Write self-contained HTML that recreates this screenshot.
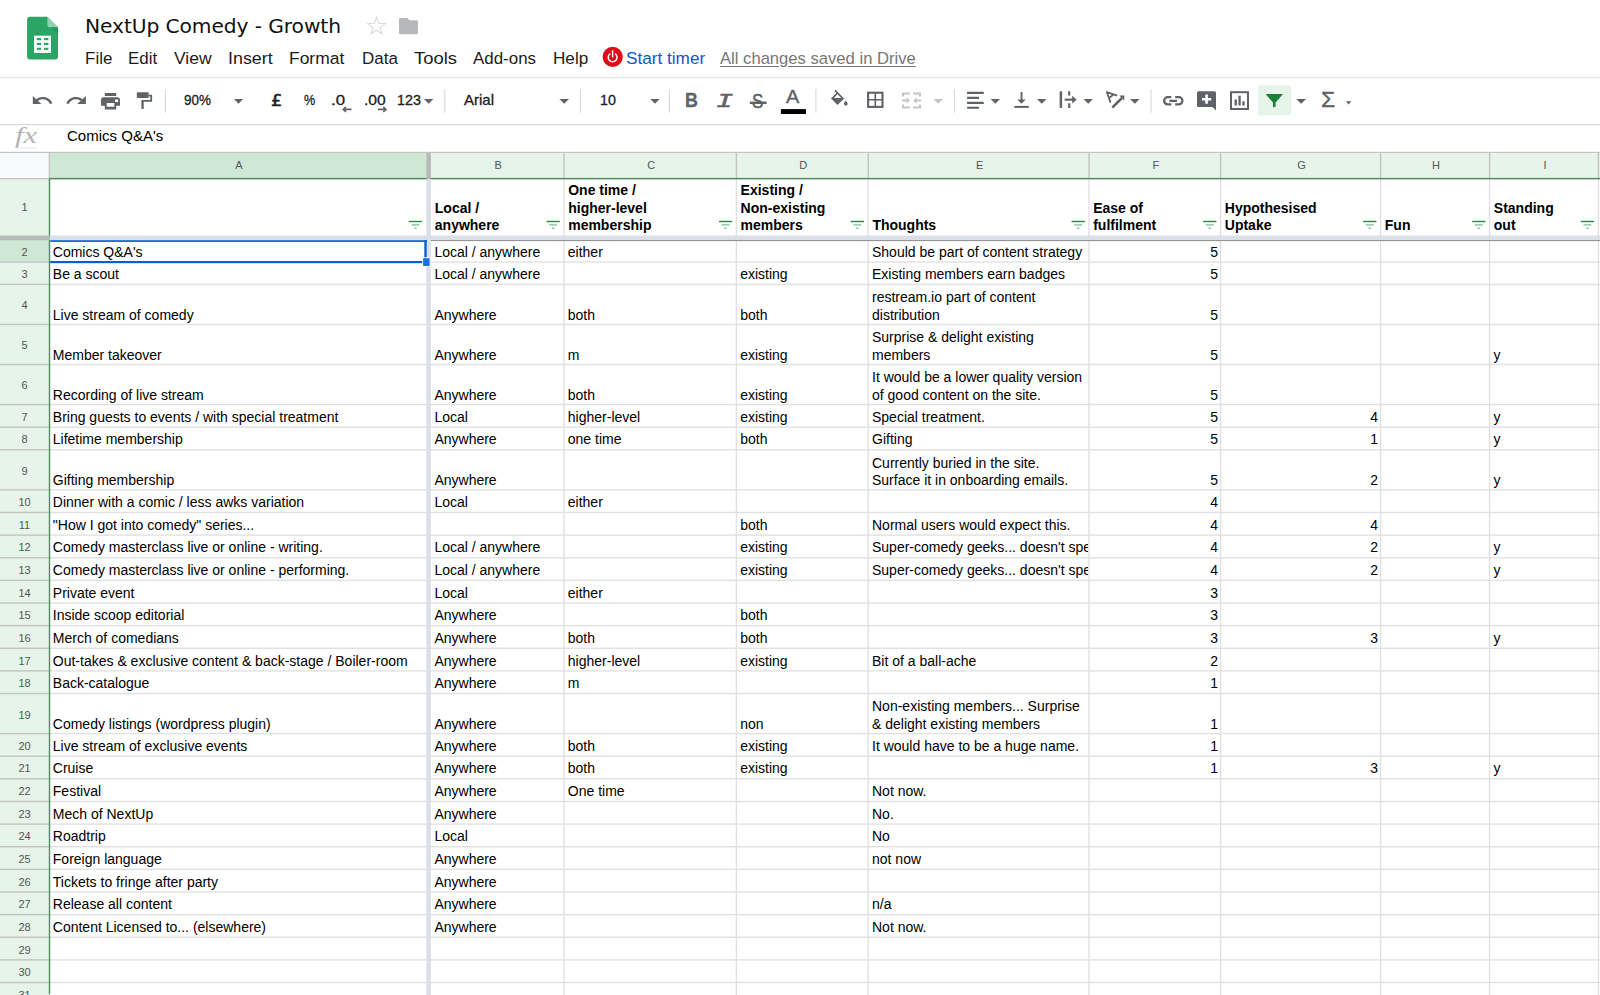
<!DOCTYPE html>
<html><head><meta charset="utf-8"><title>NextUp Comedy - Growth</title>
<style>
html,body{margin:0;padding:0;background:#fff;}
body{width:1600px;height:995px;overflow:hidden;position:relative;font-family:"Liberation Sans",sans-serif;color:#000;}
.abs{position:absolute;}
.t{position:absolute;white-space:pre;line-height:1;}
#title{font:20px/26px "DejaVu Sans","Liberation Sans",sans-serif;color:#111;letter-spacing:-0.1px;}
.m{position:absolute;top:48px;font-size:17.2px;line-height:20px;color:#1b1b1b;white-space:pre;}
.tb{position:absolute;font-size:14.4px;line-height:16px;color:#202124;white-space:pre;-webkit-text-stroke:0.3px currentColor;}
.c{position:absolute;overflow:hidden;}
.c span{position:absolute;left:3.8px;bottom:0.2px;font-size:14px;line-height:17.3px;white-space:nowrap;}
.c.r span{left:auto;right:1.7px;}
.h span{bottom:0px;}
.c.h span{font-weight:bold;bottom:0px;}
.l{position:absolute;height:18px;line-height:18px;font-size:14px;white-space:nowrap;overflow:hidden;}
.l.b{font-weight:bold;}
.l.r{text-align:right;}
.rn{position:absolute;left:0;width:49px;text-align:center;font-size:11px;line-height:12px;color:#555;}
.cn{position:absolute;top:158.5px;text-align:center;font-size:11px;line-height:12px;color:#555;}
svg{position:absolute;left:0;top:0;}
</style></head><body>

<div class="t fit" id="title" style="left:85.06px;top:13px;transform:scaleX(1.0117);transform-origin:0 50%;">NextUp Comedy - Growth</div>
<div class="m fit" style="left:85.13px;top:47.5px;transform:scaleX(0.9902);transform-origin:0 50%;">File</div>
<div class="m fit" style="left:128.37px;top:47.5px;transform:scaleX(0.9839);transform-origin:0 50%;">Edit</div>
<div class="m fit" style="left:174.23px;top:47.5px;transform:scaleX(1.0167);transform-origin:0 50%;">View</div>
<div class="m fit" style="left:227.59px;top:47.5px;transform:scaleX(1.0392);transform-origin:0 50%;">Insert</div>
<div class="m fit" style="left:289.45px;top:47.5px;transform:scaleX(1.0146);transform-origin:0 50%;">Format</div>
<div class="m fit" style="left:361.76px;top:47.5px;transform:scaleX(0.9862);transform-origin:0 50%;">Data</div>
<div class="m fit" style="left:413.74px;top:47.5px;transform:scaleX(1.0736);transform-origin:0 50%;">Tools</div>
<div class="m fit" style="left:472.72px;top:47.5px;transform:scaleX(0.9843);transform-origin:0 50%;">Add-ons</div>
<div class="m fit" style="left:552.70px;top:47.5px;transform:scaleX(0.9968);transform-origin:0 50%;">Help</div>
<div class="m fit" style="left:625.88px;top:47.5px;transform:scaleX(0.9986);transform-origin:0 50%;color:#1155cc">Start timer</div>
<div class="m fit" style="left:720.20px;top:47.5px;transform:scaleX(0.9666);transform-origin:0 50%;color:#777;text-decoration:underline;text-decoration-thickness:1px;text-underline-offset:2px">All changes saved in Drive</div>
<div class="tb fit" style="left:184.20px;top:91.5px;transform:scaleX(0.9337);transform-origin:0 50%;">90%</div>
<div class="tb fit" style="left:270.53px;top:92.5px;transform:scaleX(1.1771);transform-origin:0 50%;font:15px/17px 'DejaVu Sans','Liberation Sans',sans-serif;-webkit-text-stroke:0.55px currentColor">£</div>
<div class="tb fit" style="left:303.51px;top:91.5px;transform:scaleX(0.8737);transform-origin:0 50%;">%</div>
<div class="tb fit" style="left:331.16px;top:91.5px;transform:scaleX(1.1654);transform-origin:0 50%;">.0</div>
<div class="tb fit" style="left:363.89px;top:91.5px;transform:scaleX(1.0874);transform-origin:0 50%;">.00</div>
<div class="tb fit" style="left:397.00px;top:91.5px;transform:scaleX(0.9925);transform-origin:0 50%;">123</div>
<div class="tb fit" style="left:464.04px;top:91.5px;transform:scaleX(1.0434);transform-origin:0 50%;">Arial</div>
<div class="tb fit" style="left:599.87px;top:91.5px;transform:scaleX(0.9936);transform-origin:0 50%;">10</div>
<div class="tb fit" style="left:685.47px;top:88.8px;transform:scaleX(0.9143);transform-origin:0 50%;font-weight:bold;font-size:19.5px;line-height:22px;color:#5f6368">B</div>
<div class="tb fit" style="left:715.69px;top:91px;transform:scaleX(1.4704);transform-origin:0 50%;font:italic 19.5px/22px 'Liberation Mono',monospace;color:#5f6368;-webkit-text-stroke:0.5px currentColor">I</div>
<div class="tb fit" style="left:752.09px;top:90.3px;transform:scaleX(0.8363);transform-origin:0 50%;font-size:20.5px;line-height:22px;color:#5f6368;-webkit-text-stroke:0.5px currentColor">S</div>
<div class="tb fit" style="left:785.87px;top:86px;transform:scaleX(1.0491);transform-origin:0 50%;font-size:19px;line-height:22px;color:#5f6368;-webkit-text-stroke:0.4px currentColor">A</div>
<div class="tb fit" style="left:1320.83px;top:88.2px;transform:scaleX(1.0157);transform-origin:0 50%;font-size:22.5px;line-height:24px;color:#5f6368;-webkit-text-stroke:0.4px currentColor">Σ</div>
<div class="t fit" style="left:15.41px;top:123.3px;transform:scaleX(1.3368);transform-origin:0 50%;font:italic 23px/26px 'Liberation Serif',serif;color:#b4b4b4;">fx</div>
<div class="t fit" style="left:66.69px;top:127.5px;transform:scaleX(1.0297);transform-origin:0 50%;font-size:14.6px;line-height:17px;color:#000;">Comics Q&amp;A's</div>
<svg width="1600" height="995" viewBox="0 0 1600 995">
<rect x="0" y="77" width="1600" height="1.2" fill="#e3e5e8"/>
<rect x="0" y="124" width="1600" height="1.2" fill="#d9d9d9"/>
<path d="M30.1 16.8H47.4L58 27.2V56.6a3 3 0 0 1-3 3H30.1a3 3 0 0 1-3-3V19.8a3 3 0 0 1 3-3z" fill="#2ba566"/>
<path d="M47.4 16.8L58 27.2H50.2a2.8 2.8 0 0 1-2.8-2.8z" fill="#8fd3b3"/>
<path d="M50.5 27.2H58V34.5z" fill="#239259" opacity=".7"/>
<rect x="34" y="35.7" width="17" height="17.3" fill="#f4faf7"/>
<rect x="36.9" y="38" width="4.2" height="2.1" fill="#2ba566"/>
<rect x="36.9" y="42.9" width="4.2" height="2.1" fill="#2ba566"/>
<rect x="36.9" y="47.8" width="4.2" height="2.1" fill="#2ba566"/>
<rect x="44.1" y="38" width="4.2" height="2.1" fill="#2ba566"/>
<rect x="44.1" y="42.9" width="4.2" height="2.1" fill="#2ba566"/>
<rect x="44.1" y="47.8" width="4.2" height="2.1" fill="#2ba566"/>
<polygon points="376.6,17.2 378.8,23.3 385.3,23.6 380.2,27.6 382.0,33.8 376.6,30.2 371.2,33.8 373.0,27.6 367.9,23.6 374.4,23.3" fill="none" stroke="#dadada" stroke-width="1.1" stroke-linejoin="miter"/>
<path d="M400.1 18h6.7a1.1 1.1 0 0 1 .8.35l1.9 1.95h7.3a1.1 1.1 0 0 1 1.1 1.1v11.7a1.1 1.1 0 0 1-1.1 1.1h-16.7a1.1 1.1 0 0 1-1.1-1.1v-14a1.1 1.1 0 0 1 1.1-1.1z" fill="#b6b7ba"/>
<circle cx="612.7" cy="56.8" r="10.1" fill="#e30a17"/>
<path d="M610.27 53.57A4.4 4.4 0 1 0 614.93 53.57" fill="none" stroke="#fff" stroke-width="1.45"/>
<rect x="611.85" y="50.3" width="1.5" height="7.3" rx=".5" fill="#fff"/>
<rect x="164.8" y="89" width="1.2" height="23.8" fill="#dadce0"/>
<rect x="444.2" y="89" width="1.2" height="23.8" fill="#dadce0"/>
<rect x="579.8" y="89" width="1.2" height="23.8" fill="#dadce0"/>
<rect x="668.8" y="89" width="1.2" height="23.8" fill="#dadce0"/>
<rect x="815.3" y="89" width="1.2" height="23.8" fill="#dadce0"/>
<rect x="953.8" y="89" width="1.2" height="23.8" fill="#dadce0"/>
<rect x="1150.4" y="89" width="1.2" height="23.8" fill="#dadce0"/>
<path d="M234 99.0H243.1L238.55 103.8z" fill="#5f6368"/>
<path d="M424 99.0H433.4L428.7 103.8z" fill="#5f6368"/>
<path d="M559.4 99.0H569L564.2 103.8z" fill="#5f6368"/>
<path d="M650.3 99.0H659.6L654.95 103.8z" fill="#5f6368"/>
<path d="M990.6 99.0H1000L995.3 103.8z" fill="#5f6368"/>
<path d="M1037 99.0H1046.5L1041.75 103.8z" fill="#5f6368"/>
<path d="M1083.5 99.0H1092.9L1088.2 103.8z" fill="#5f6368"/>
<path d="M1130 99.0H1139.6L1134.8 103.8z" fill="#5f6368"/>
<path d="M1296.3 99.0H1306L1301.15 103.8z" fill="#5f6368"/>
<path d="M933.5 99.0H942.9L938.2 103.8z" fill="#c4c4c4"/>
<path d="M1345.9 101.3H1351.3L1348.6 104.4z" fill="#5f6368"/>
<path transform="translate(30.9 89.8) scale(0.955 0.89)" d="M12.5 8c-2.65 0-5.05.99-6.9 2.6L2 7v9h9l-3.62-3.62c1.39-1.16 3.16-1.88 5.12-1.88 3.54 0 6.55 2.31 7.6 5.5l2.37-.78C21.08 11.03 17.15 8 12.5 8z" fill="#5f6368"/>
<path transform="translate(64.9 89.8) scale(0.955 0.89)" d="M18.4 10.6C16.55 8.99 14.15 8 11.5 8c-4.65 0-8.58 3.03-9.96 7.22L3.9 16c1.05-3.19 4.05-5.5 7.6-5.5 1.95 0 3.73.72 5.12 1.88L13 16h9V7l-3.6 3.6z" fill="#5f6368"/>
<path d="M104.8 93h11.4v3h-11.4zM103.8 97.2h13.4a2.8 2.8 0 0 1 2.8 2.8v5.8h-3.8v3.6h-11.4v-3.6h-3.8v-5.8a2.8 2.8 0 0 1 2.8-2.8zm2.9 5.9v3.7h7.6v-3.7zm8.3-3.5v2.5h3.2v-2.5z" fill="#5f6368" fill-rule="evenodd"/>
<path d="M137.8 92.2h9.9a1 1 0 0 1 1 1v3.8a1 1 0 0 1-1 1h-9.9a1 1 0 0 1-1-1v-3.8a1 1 0 0 1 1-1z" fill="#5f6368"/>
<path d="M148.6 95.6h2.6v5.3h-8.6" fill="none" stroke="#5f6368" stroke-width="1.8"/>
<rect x="141.4" y="100" width="2.3" height="8.9" fill="#5f6368"/>
<path d="M351.5 109.4h-8M346 106.9l-2.7 2.5 2.7 2.5" fill="none" stroke="#5f6368" stroke-width="1.6"/>
<path d="M377.8 109.4h8M383.3 106.9l2.7 2.5-2.7 2.5" fill="none" stroke="#5f6368" stroke-width="1.6"/>
<rect x="749.8" y="101.6" width="16.8" height="2.4" fill="#5f6368"/>
<rect x="780.9" y="109.1" width="25.1" height="4.9" fill="#000"/>
<path d="M834.9 90.4l8 8-5.35 5.35-5.35-5.35 5.2-5.2" fill="none" stroke="#5f6368" stroke-width="1.7" stroke-linejoin="miter"/>
<path d="M832 98.1h11.1l-5.55 5.6z" fill="#5f6368"/>
<path d="M845.8 100.7s1.9 2 1.9 3a1.9 1.9 0 0 1-3.8 0c0-1 1.9-3 1.9-3z" fill="#5f6368"/>
<rect x="868.1" y="92.7" width="14.4" height="14.2" fill="none" stroke="#5f6368" stroke-width="2.1"/>
<path d="M875.3 92.7v14.2M868.1 99.8h14.4" fill="none" stroke="#5f6368" stroke-width="1.6"/>
<path d="M903 96.6v-3.1h6.9M920 96.6v-3.1h-6.9M903 104.4v3.1h6.9M920 104.4v3.1h-6.9" fill="none" stroke="#c6c6c6" stroke-width="2"/>
<path d="M902 100.5h5M921 100.5h-5" fill="none" stroke="#c6c6c6" stroke-width="1.9"/>
<path d="M906.4 97.5l3.6 3-3.6 3zM916.7 97.5l-3.6 3 3.6 3z" fill="#c6c6c6"/>
<path d="M967.1 92.9h16.7M967.1 97.9h12M967.1 102.9h16.7M967.1 107.8h12" stroke="#5f6368" stroke-width="2.1" fill="none"/>
<path d="M1021.5 91.9v10" stroke="#5f6368" stroke-width="1.9" fill="none"/><path d="M1017.3 99.4h8.4l-4.2 4.4z" fill="#5f6368"/><rect x="1014.4" y="105.9" width="14.4" height="2" fill="#5f6368"/>
<rect x="1059.65" y="91.3" width="2.5" height="16.6" fill="#5f6368"/>
<path d="M1069.2 91.3v4.3M1069.2 103.3v4.6" stroke="#5f6368" stroke-width="2.2" fill="none"/>
<path d="M1064.6 99.65h8.6" stroke="#5f6368" stroke-width="2.1" fill="none"/>
<path d="M1072.4 96.2l3.9 3.45-3.9 3.45z" fill="#5f6368" stroke="#5f6368" stroke-width=".6" stroke-linejoin="round"/>
<path d="M1110.6 102.6l-3.7-10.4 10.3 3.5M1108.9 98.1l4.6-3.6" stroke="#5f6368" stroke-width="1.8" fill="none" stroke-linejoin="round"/>
<path d="M1112.3 107.6l9.6-9.6" stroke="#5f6368" stroke-width="2.5" fill="none"/>
<path d="M1119.3 95.6h5v5z" fill="#5f6368"/>
<path d="M1171.3 97.2h-3.6a3.6 3.6 0 0 0 0 7.2h3.6M1175.2 97.2h3.6a3.6 3.6 0 0 1 0 7.2h-3.6M1169.4 100.8h7.7" stroke="#5f6368" stroke-width="2.3" fill="none"/>
<path d="M1198.6 91.2h15.8a1.6 1.6 0 0 1 1.6 1.6v17.8l-3.6-3.6h-13.8a1.6 1.6 0 0 1-1.6-1.6v-12.6a1.6 1.6 0 0 1 1.6-1.6z" fill="#5f6368"/>
<path d="M1206.6 94.6v9.2M1202 99.2h9.2" stroke="#fff" stroke-width="2.6" fill="none"/>
<rect x="1231" y="92.2" width="17" height="16.8" fill="none" stroke="#5f6368" stroke-width="2"/>
<path d="M1235.7 99.4v6.2M1239.6 95.8v9.8M1243.5 101.2v4.4" stroke="#5f6368" stroke-width="2.3" fill="none"/>
<rect x="17" y="147.6" width="20" height="1" fill="#dfe7f6"/>
<rect x="1258" y="85.2" width="33.3" height="30.4" rx="2.5" fill="#e6f4ea"/>
<path d="M1265.6 94h17.4l-7.4 8.6v4.2l-2.6 .5v-4.7z" fill="#188038"/>
</svg>
<svg width="1600" height="995" viewBox="0 0 1600 995">
<rect x="0" y="151.8" width="1600" height="1.2" fill="#c4c4c4"/>
<rect x="0" y="153.0" width="49" height="25.599999999999987" fill="#f8f9fa"/>
<rect x="49.4" y="153.0" width="1551" height="25.599999999999987" fill="#e6f4ea"/>
<rect x="49.4" y="153.0" width="376.90000000000003" height="25.599999999999987" fill="#cfe8d6"/>
<rect x="0" y="178.6" width="49.4" height="816.4" fill="#e6f4ea"/>
<rect x="0" y="239.14" width="49.4" height="22.930000000000007" fill="#cfe8d6"/>
<rect x="48.7" y="152.4" width="1.2" height="26.19999999999999" fill="#c3c3c3"/>
<rect x="563.3" y="152.4" width="1.4" height="26.19999999999999" fill="#c3c3c3"/>
<rect x="735.6999999999999" y="152.4" width="1.4" height="26.19999999999999" fill="#c3c3c3"/>
<rect x="867.5" y="152.4" width="1.4" height="26.19999999999999" fill="#c3c3c3"/>
<rect x="1088.3" y="152.4" width="1.4" height="26.19999999999999" fill="#c3c3c3"/>
<rect x="1219.8999999999999" y="152.4" width="1.4" height="26.19999999999999" fill="#c3c3c3"/>
<rect x="1379.8999999999999" y="152.4" width="1.4" height="26.19999999999999" fill="#c3c3c3"/>
<rect x="1488.8999999999999" y="152.4" width="1.4" height="26.19999999999999" fill="#c3c3c3"/>
<rect x="1597.7" y="152.4" width="1.4" height="26.19999999999999" fill="#c3c3c3"/>
<rect x="563.3" y="179.2" width="1.4" height="816.4" fill="#e1e1e1"/>
<rect x="735.6999999999999" y="179.2" width="1.4" height="816.4" fill="#e1e1e1"/>
<rect x="867.5" y="179.2" width="1.4" height="816.4" fill="#e1e1e1"/>
<rect x="1088.3" y="179.2" width="1.4" height="816.4" fill="#e1e1e1"/>
<rect x="1219.8999999999999" y="179.2" width="1.4" height="816.4" fill="#e1e1e1"/>
<rect x="1379.8999999999999" y="179.2" width="1.4" height="816.4" fill="#e1e1e1"/>
<rect x="1488.8999999999999" y="179.2" width="1.4" height="816.4" fill="#e1e1e1"/>
<rect x="1597.7" y="179.2" width="1.4" height="816.4" fill="#e1e1e1"/>
<rect x="49.4" y="261.37" width="1551" height="1.4" fill="#e1e1e1"/>
<rect x="0" y="261.37" width="49" height="1.4" fill="#c3c3c3"/>
<rect x="49.4" y="283.70" width="1551" height="1.4" fill="#e1e1e1"/>
<rect x="0" y="283.70" width="49" height="1.4" fill="#c3c3c3"/>
<rect x="49.4" y="323.75" width="1551" height="1.4" fill="#e1e1e1"/>
<rect x="0" y="323.75" width="49" height="1.4" fill="#c3c3c3"/>
<rect x="49.4" y="363.80" width="1551" height="1.4" fill="#e1e1e1"/>
<rect x="0" y="363.80" width="49" height="1.4" fill="#c3c3c3"/>
<rect x="49.4" y="403.85" width="1551" height="1.4" fill="#e1e1e1"/>
<rect x="0" y="403.85" width="49" height="1.4" fill="#c3c3c3"/>
<rect x="49.4" y="426.48" width="1551" height="1.4" fill="#e1e1e1"/>
<rect x="0" y="426.48" width="49" height="1.4" fill="#c3c3c3"/>
<rect x="49.4" y="449.11" width="1551" height="1.4" fill="#e1e1e1"/>
<rect x="0" y="449.11" width="49" height="1.4" fill="#c3c3c3"/>
<rect x="49.4" y="489.16" width="1551" height="1.4" fill="#e1e1e1"/>
<rect x="0" y="489.16" width="49" height="1.4" fill="#c3c3c3"/>
<rect x="49.4" y="511.79" width="1551" height="1.4" fill="#e1e1e1"/>
<rect x="0" y="511.79" width="49" height="1.4" fill="#c3c3c3"/>
<rect x="49.4" y="534.42" width="1551" height="1.4" fill="#e1e1e1"/>
<rect x="0" y="534.42" width="49" height="1.4" fill="#c3c3c3"/>
<rect x="49.4" y="557.05" width="1551" height="1.4" fill="#e1e1e1"/>
<rect x="0" y="557.05" width="49" height="1.4" fill="#c3c3c3"/>
<rect x="49.4" y="579.68" width="1551" height="1.4" fill="#e1e1e1"/>
<rect x="0" y="579.68" width="49" height="1.4" fill="#c3c3c3"/>
<rect x="49.4" y="602.31" width="1551" height="1.4" fill="#e1e1e1"/>
<rect x="0" y="602.31" width="49" height="1.4" fill="#c3c3c3"/>
<rect x="49.4" y="624.94" width="1551" height="1.4" fill="#e1e1e1"/>
<rect x="0" y="624.94" width="49" height="1.4" fill="#c3c3c3"/>
<rect x="49.4" y="647.57" width="1551" height="1.4" fill="#e1e1e1"/>
<rect x="0" y="647.57" width="49" height="1.4" fill="#c3c3c3"/>
<rect x="49.4" y="670.20" width="1551" height="1.4" fill="#e1e1e1"/>
<rect x="0" y="670.20" width="49" height="1.4" fill="#c3c3c3"/>
<rect x="49.4" y="692.83" width="1551" height="1.4" fill="#e1e1e1"/>
<rect x="0" y="692.83" width="49" height="1.4" fill="#c3c3c3"/>
<rect x="49.4" y="732.88" width="1551" height="1.4" fill="#e1e1e1"/>
<rect x="0" y="732.88" width="49" height="1.4" fill="#c3c3c3"/>
<rect x="49.4" y="755.51" width="1551" height="1.4" fill="#e1e1e1"/>
<rect x="0" y="755.51" width="49" height="1.4" fill="#c3c3c3"/>
<rect x="49.4" y="778.14" width="1551" height="1.4" fill="#e1e1e1"/>
<rect x="0" y="778.14" width="49" height="1.4" fill="#c3c3c3"/>
<rect x="49.4" y="800.77" width="1551" height="1.4" fill="#e1e1e1"/>
<rect x="0" y="800.77" width="49" height="1.4" fill="#c3c3c3"/>
<rect x="49.4" y="823.40" width="1551" height="1.4" fill="#e1e1e1"/>
<rect x="0" y="823.40" width="49" height="1.4" fill="#c3c3c3"/>
<rect x="49.4" y="846.03" width="1551" height="1.4" fill="#e1e1e1"/>
<rect x="0" y="846.03" width="49" height="1.4" fill="#c3c3c3"/>
<rect x="49.4" y="868.66" width="1551" height="1.4" fill="#e1e1e1"/>
<rect x="0" y="868.66" width="49" height="1.4" fill="#c3c3c3"/>
<rect x="49.4" y="891.29" width="1551" height="1.4" fill="#e1e1e1"/>
<rect x="0" y="891.29" width="49" height="1.4" fill="#c3c3c3"/>
<rect x="49.4" y="913.92" width="1551" height="1.4" fill="#e1e1e1"/>
<rect x="0" y="913.92" width="49" height="1.4" fill="#c3c3c3"/>
<rect x="49.4" y="936.55" width="1551" height="1.4" fill="#e1e1e1"/>
<rect x="0" y="936.55" width="49" height="1.4" fill="#c3c3c3"/>
<rect x="49.4" y="959.18" width="1551" height="1.4" fill="#e1e1e1"/>
<rect x="0" y="959.18" width="49" height="1.4" fill="#c3c3c3"/>
<rect x="49.4" y="981.81" width="1551" height="1.4" fill="#e1e1e1"/>
<rect x="0" y="981.81" width="49" height="1.4" fill="#c3c3c3"/>
<rect x="49.4" y="177.9" width="1551" height="1.5" fill="#4a8f5c"/>
<rect x="48.8" y="177.9" width="1.4" height="816.4" fill="#4a8f5c"/>
<rect x="0" y="178.0" width="48.8" height="1.3" fill="#c3c3c3"/>
<rect x="426.3" y="178.6" width="4.599999999999966" height="816.4" fill="#dbdfe8"/>
<rect x="426.3" y="153.0" width="4.599999999999966" height="25.599999999999987" fill="#b9b9b9"/>
<rect x="49.4" y="235.5" width="1551" height="4.699999999999989" fill="#dbdfe8"/>
<rect x="0" y="235.5" width="49.4" height="4.699999999999989" fill="#b9b9b9"/>
<rect x="430.9" y="240.1" width="1170" height="1" fill="#8a8a8a"/>
<path d="M408.9 221.5h13.2" stroke="#1e8e3e" stroke-width="1.4"/><path d="M411.5 224.9h7.9" stroke="#1e8e3e" stroke-width="1.2" opacity=".6"/><path d="M414.2 228.2h2.4" stroke="#1e8e3e" stroke-width="1.2" opacity=".6"/>
<path d="M546.6 221.5h13.2" stroke="#1e8e3e" stroke-width="1.4"/><path d="M549.2 224.9h7.9" stroke="#1e8e3e" stroke-width="1.2" opacity=".6"/><path d="M551.9 228.2h2.4" stroke="#1e8e3e" stroke-width="1.2" opacity=".6"/>
<path d="M719.0 221.5h13.2" stroke="#1e8e3e" stroke-width="1.4"/><path d="M721.6 224.9h7.9" stroke="#1e8e3e" stroke-width="1.2" opacity=".6"/><path d="M724.3 228.2h2.4" stroke="#1e8e3e" stroke-width="1.2" opacity=".6"/>
<path d="M850.8 221.5h13.2" stroke="#1e8e3e" stroke-width="1.4"/><path d="M853.4 224.9h7.9" stroke="#1e8e3e" stroke-width="1.2" opacity=".6"/><path d="M856.1 228.2h2.4" stroke="#1e8e3e" stroke-width="1.2" opacity=".6"/>
<path d="M1071.6 221.5h13.2" stroke="#1e8e3e" stroke-width="1.4"/><path d="M1074.2 224.9h7.9" stroke="#1e8e3e" stroke-width="1.2" opacity=".6"/><path d="M1076.9 228.2h2.4" stroke="#1e8e3e" stroke-width="1.2" opacity=".6"/>
<path d="M1203.2 221.5h13.2" stroke="#1e8e3e" stroke-width="1.4"/><path d="M1205.8 224.9h7.9" stroke="#1e8e3e" stroke-width="1.2" opacity=".6"/><path d="M1208.5 228.2h2.4" stroke="#1e8e3e" stroke-width="1.2" opacity=".6"/>
<path d="M1363.2 221.5h13.2" stroke="#1e8e3e" stroke-width="1.4"/><path d="M1365.8 224.9h7.9" stroke="#1e8e3e" stroke-width="1.2" opacity=".6"/><path d="M1368.5 228.2h2.4" stroke="#1e8e3e" stroke-width="1.2" opacity=".6"/>
<path d="M1472.2 221.5h13.2" stroke="#1e8e3e" stroke-width="1.4"/><path d="M1474.8 224.9h7.9" stroke="#1e8e3e" stroke-width="1.2" opacity=".6"/><path d="M1477.5 228.2h2.4" stroke="#1e8e3e" stroke-width="1.2" opacity=".6"/>
<path d="M1581.0 221.5h13.2" stroke="#1e8e3e" stroke-width="1.4"/><path d="M1583.6 224.9h7.9" stroke="#1e8e3e" stroke-width="1.2" opacity=".6"/><path d="M1586.3 228.2h2.4" stroke="#1e8e3e" stroke-width="1.2" opacity=".6"/>
<rect x="50.2" y="240.20" width="376.70" height="1.7" fill="#0b5cd6"/>
<rect x="50.2" y="260.97" width="376.70" height="2.2" fill="#0b5cd6"/>
<rect x="424.30" y="240.20" width="2.4" height="21.87" fill="#0b5cd6"/>
<rect x="422.2" y="257.3" width="8.2" height="9.2" fill="#fff"/><rect x="423.1" y="258.2" width="6.5" height="7.8" fill="#1f6fe0"/>
</svg>
<div class="cn" style="left:50.4px;width:376.9px">A</div>
<div class="cn" style="left:431.6px;width:133.4px">B</div>
<div class="cn" style="left:565.0px;width:172.4px">C</div>
<div class="cn" style="left:737.4px;width:131.8px">D</div>
<div class="cn" style="left:869.2px;width:220.8px">E</div>
<div class="cn" style="left:1090.0px;width:131.6px">F</div>
<div class="cn" style="left:1221.6px;width:160.0px">G</div>
<div class="cn" style="left:1381.6px;width:109.0px">H</div>
<div class="cn" style="left:1490.6px;width:108.8px">I</div>
<div class="rn" style="top:201.0px">1</div>
<div class="rn" style="top:245.5px">2</div>
<div class="rn" style="top:268.0px">3</div>
<div class="rn" style="top:299.3px">4</div>
<div class="rn" style="top:339.4px">5</div>
<div class="rn" style="top:379.4px">6</div>
<div class="rn" style="top:410.8px">7</div>
<div class="rn" style="top:433.4px">8</div>
<div class="rn" style="top:464.7px">9</div>
<div class="rn" style="top:496.1px">10</div>
<div class="rn" style="top:518.7px">11</div>
<div class="rn" style="top:541.3px">12</div>
<div class="rn" style="top:564.0px">13</div>
<div class="rn" style="top:586.6px">14</div>
<div class="rn" style="top:609.2px">15</div>
<div class="rn" style="top:631.9px">16</div>
<div class="rn" style="top:654.5px">17</div>
<div class="rn" style="top:677.1px">18</div>
<div class="rn" style="top:708.5px">19</div>
<div class="rn" style="top:739.8px">20</div>
<div class="rn" style="top:762.4px">21</div>
<div class="rn" style="top:785.1px">22</div>
<div class="rn" style="top:807.7px">23</div>
<div class="rn" style="top:830.3px">24</div>
<div class="rn" style="top:852.9px">25</div>
<div class="rn" style="top:875.6px">26</div>
<div class="rn" style="top:898.2px">27</div>
<div class="rn" style="top:920.8px">28</div>
<div class="rn" style="top:943.5px">29</div>
<div class="rn" style="top:966.1px">30</div>
<div class="rn" style="top:988.7px">31</div>
<div class="l b" style="left:434.8px;top:199px;width:128.9px">Local /</div>
<div class="l b" style="left:434.8px;top:216px;width:128.9px">anywhere</div>
<div class="l b" style="left:568.2px;top:181px;width:167.9px">One time /</div>
<div class="l b" style="left:568.2px;top:199px;width:167.9px">higher-level</div>
<div class="l b" style="left:568.2px;top:216px;width:167.9px">membership</div>
<div class="l b" style="left:740.6px;top:181px;width:127.3px">Existing /</div>
<div class="l b" style="left:740.6px;top:199px;width:127.3px">Non-existing</div>
<div class="l b" style="left:740.6px;top:216px;width:127.3px">members</div>
<div class="l b" style="left:872.4px;top:216px;width:216.3px">Thoughts</div>
<div class="l b" style="left:1093.2px;top:199px;width:127.1px">Ease of</div>
<div class="l b" style="left:1093.2px;top:216px;width:127.1px">fulfilment</div>
<div class="l b" style="left:1224.8px;top:199px;width:155.5px">Hypothesised</div>
<div class="l b" style="left:1224.8px;top:216px;width:155.5px">Uptake</div>
<div class="l b" style="left:1384.8px;top:216px;width:104.5px">Fun</div>
<div class="l b" style="left:1493.8px;top:199px;width:104.3px">Standing</div>
<div class="l b" style="left:1493.8px;top:216px;width:104.3px">out</div>
<div class="l" style="left:52.8px;top:243px;width:372.8px">Comics Q&A's</div>
<div class="l" style="left:434.4px;top:243px;width:128.9px">Local / anywhere</div>
<div class="l" style="left:567.8px;top:243px;width:167.9px">either</div>
<div class="l" style="left:872.0px;top:243px;width:216.3px">Should be part of content strategy</div>
<div class="l r" style="left:1090.0px;top:243px;width:128.0px">5</div>
<div class="l" style="left:52.8px;top:265px;width:372.8px">Be a scout</div>
<div class="l" style="left:434.4px;top:265px;width:128.9px">Local / anywhere</div>
<div class="l" style="left:740.2px;top:265px;width:127.3px">existing</div>
<div class="l" style="left:872.0px;top:265px;width:216.3px">Existing members earn badges</div>
<div class="l r" style="left:1090.0px;top:265px;width:128.0px">5</div>
<div class="l" style="left:52.8px;top:306px;width:372.8px">Live stream of comedy</div>
<div class="l" style="left:434.4px;top:306px;width:128.9px">Anywhere</div>
<div class="l" style="left:567.8px;top:306px;width:167.9px">both</div>
<div class="l" style="left:740.2px;top:306px;width:127.3px">both</div>
<div class="l" style="left:872.0px;top:288px;width:216.3px">restream.io part of content</div>
<div class="l" style="left:872.0px;top:306px;width:216.3px">distribution</div>
<div class="l r" style="left:1090.0px;top:306px;width:128.0px">5</div>
<div class="l" style="left:52.8px;top:346px;width:372.8px">Member takeover</div>
<div class="l" style="left:434.4px;top:346px;width:128.9px">Anywhere</div>
<div class="l" style="left:567.8px;top:346px;width:167.9px">m</div>
<div class="l" style="left:740.2px;top:346px;width:127.3px">existing</div>
<div class="l" style="left:872.0px;top:328px;width:216.3px">Surprise &amp; delight existing</div>
<div class="l" style="left:872.0px;top:346px;width:216.3px">members</div>
<div class="l r" style="left:1090.0px;top:346px;width:128.0px">5</div>
<div class="l" style="left:1493.4px;top:346px;width:104.3px">y</div>
<div class="l" style="left:52.8px;top:386px;width:372.8px">Recording of live stream</div>
<div class="l" style="left:434.4px;top:386px;width:128.9px">Anywhere</div>
<div class="l" style="left:567.8px;top:386px;width:167.9px">both</div>
<div class="l" style="left:740.2px;top:386px;width:127.3px">existing</div>
<div class="l" style="left:872.0px;top:368px;width:216.3px">It would be a lower quality version</div>
<div class="l" style="left:872.0px;top:386px;width:216.3px">of good content on the site.</div>
<div class="l r" style="left:1090.0px;top:386px;width:128.0px">5</div>
<div class="l" style="left:52.8px;top:408px;width:372.8px">Bring guests to events / with special treatment</div>
<div class="l" style="left:434.4px;top:408px;width:128.9px">Local</div>
<div class="l" style="left:567.8px;top:408px;width:167.9px">higher-level</div>
<div class="l" style="left:740.2px;top:408px;width:127.3px">existing</div>
<div class="l" style="left:872.0px;top:408px;width:216.3px">Special treatment.</div>
<div class="l r" style="left:1090.0px;top:408px;width:128.0px">5</div>
<div class="l r" style="left:1221.6px;top:408px;width:156.4px">4</div>
<div class="l" style="left:1493.4px;top:408px;width:104.3px">y</div>
<div class="l" style="left:52.8px;top:430px;width:372.8px">Lifetime membership</div>
<div class="l" style="left:434.4px;top:430px;width:128.9px">Anywhere</div>
<div class="l" style="left:567.8px;top:430px;width:167.9px">one time</div>
<div class="l" style="left:740.2px;top:430px;width:127.3px">both</div>
<div class="l" style="left:872.0px;top:430px;width:216.3px">Gifting</div>
<div class="l r" style="left:1090.0px;top:430px;width:128.0px">5</div>
<div class="l r" style="left:1221.6px;top:430px;width:156.4px">1</div>
<div class="l" style="left:1493.4px;top:430px;width:104.3px">y</div>
<div class="l" style="left:52.8px;top:471px;width:372.8px">Gifting membership</div>
<div class="l" style="left:434.4px;top:471px;width:128.9px">Anywhere</div>
<div class="l" style="left:872.0px;top:454px;width:216.3px">Currently buried in the site.</div>
<div class="l" style="left:872.0px;top:471px;width:216.3px">Surface it in onboarding emails.</div>
<div class="l r" style="left:1090.0px;top:471px;width:128.0px">5</div>
<div class="l r" style="left:1221.6px;top:471px;width:156.4px">2</div>
<div class="l" style="left:1493.4px;top:471px;width:104.3px">y</div>
<div class="l" style="left:52.8px;top:493px;width:372.8px">Dinner with a comic / less awks variation</div>
<div class="l" style="left:434.4px;top:493px;width:128.9px">Local</div>
<div class="l" style="left:567.8px;top:493px;width:167.9px">either</div>
<div class="l r" style="left:1090.0px;top:493px;width:128.0px">4</div>
<div class="l" style="left:52.8px;top:516px;width:372.8px">"How I got into comedy" series...</div>
<div class="l" style="left:740.2px;top:516px;width:127.3px">both</div>
<div class="l" style="left:872.0px;top:516px;width:216.3px">Normal users would expect this.</div>
<div class="l r" style="left:1090.0px;top:516px;width:128.0px">4</div>
<div class="l r" style="left:1221.6px;top:516px;width:156.4px">4</div>
<div class="l" style="left:52.8px;top:538px;width:372.8px">Comedy masterclass live or online - writing.</div>
<div class="l" style="left:434.4px;top:538px;width:128.9px">Local / anywhere</div>
<div class="l" style="left:740.2px;top:538px;width:127.3px">existing</div>
<div class="l" style="left:872.0px;top:538px;width:216.3px">Super-comedy geeks... doesn't speak to many</div>
<div class="l r" style="left:1090.0px;top:538px;width:128.0px">4</div>
<div class="l r" style="left:1221.6px;top:538px;width:156.4px">2</div>
<div class="l" style="left:1493.4px;top:538px;width:104.3px">y</div>
<div class="l" style="left:52.8px;top:561px;width:372.8px">Comedy masterclass live or online - performing.</div>
<div class="l" style="left:434.4px;top:561px;width:128.9px">Local / anywhere</div>
<div class="l" style="left:740.2px;top:561px;width:127.3px">existing</div>
<div class="l" style="left:872.0px;top:561px;width:216.3px">Super-comedy geeks... doesn't speak to many</div>
<div class="l r" style="left:1090.0px;top:561px;width:128.0px">4</div>
<div class="l r" style="left:1221.6px;top:561px;width:156.4px">2</div>
<div class="l" style="left:1493.4px;top:561px;width:104.3px">y</div>
<div class="l" style="left:52.8px;top:584px;width:372.8px">Private event</div>
<div class="l" style="left:434.4px;top:584px;width:128.9px">Local</div>
<div class="l" style="left:567.8px;top:584px;width:167.9px">either</div>
<div class="l r" style="left:1090.0px;top:584px;width:128.0px">3</div>
<div class="l" style="left:52.8px;top:606px;width:372.8px">Inside scoop editorial</div>
<div class="l" style="left:434.4px;top:606px;width:128.9px">Anywhere</div>
<div class="l" style="left:740.2px;top:606px;width:127.3px">both</div>
<div class="l r" style="left:1090.0px;top:606px;width:128.0px">3</div>
<div class="l" style="left:52.8px;top:629px;width:372.8px">Merch of comedians</div>
<div class="l" style="left:434.4px;top:629px;width:128.9px">Anywhere</div>
<div class="l" style="left:567.8px;top:629px;width:167.9px">both</div>
<div class="l" style="left:740.2px;top:629px;width:127.3px">both</div>
<div class="l r" style="left:1090.0px;top:629px;width:128.0px">3</div>
<div class="l r" style="left:1221.6px;top:629px;width:156.4px">3</div>
<div class="l" style="left:1493.4px;top:629px;width:104.3px">y</div>
<div class="l" style="left:52.8px;top:652px;width:372.8px">Out-takes &amp; exclusive content &amp; back-stage / Boiler-room</div>
<div class="l" style="left:434.4px;top:652px;width:128.9px">Anywhere</div>
<div class="l" style="left:567.8px;top:652px;width:167.9px">higher-level</div>
<div class="l" style="left:740.2px;top:652px;width:127.3px">existing</div>
<div class="l" style="left:872.0px;top:652px;width:216.3px">Bit of a ball-ache</div>
<div class="l r" style="left:1090.0px;top:652px;width:128.0px">2</div>
<div class="l" style="left:52.8px;top:674px;width:372.8px">Back-catalogue</div>
<div class="l" style="left:434.4px;top:674px;width:128.9px">Anywhere</div>
<div class="l" style="left:567.8px;top:674px;width:167.9px">m</div>
<div class="l r" style="left:1090.0px;top:674px;width:128.0px">1</div>
<div class="l" style="left:52.8px;top:715px;width:372.8px">Comedy listings (wordpress plugin)</div>
<div class="l" style="left:434.4px;top:715px;width:128.9px">Anywhere</div>
<div class="l" style="left:740.2px;top:715px;width:127.3px">non</div>
<div class="l" style="left:872.0px;top:697px;width:216.3px">Non-existing members... Surprise</div>
<div class="l" style="left:872.0px;top:715px;width:216.3px">&amp; delight existing members</div>
<div class="l r" style="left:1090.0px;top:715px;width:128.0px">1</div>
<div class="l" style="left:52.8px;top:737px;width:372.8px">Live stream of exclusive events</div>
<div class="l" style="left:434.4px;top:737px;width:128.9px">Anywhere</div>
<div class="l" style="left:567.8px;top:737px;width:167.9px">both</div>
<div class="l" style="left:740.2px;top:737px;width:127.3px">existing</div>
<div class="l" style="left:872.0px;top:737px;width:216.3px">It would have to be a huge name.</div>
<div class="l r" style="left:1090.0px;top:737px;width:128.0px">1</div>
<div class="l" style="left:52.8px;top:759px;width:372.8px">Cruise</div>
<div class="l" style="left:434.4px;top:759px;width:128.9px">Anywhere</div>
<div class="l" style="left:567.8px;top:759px;width:167.9px">both</div>
<div class="l" style="left:740.2px;top:759px;width:127.3px">existing</div>
<div class="l r" style="left:1090.0px;top:759px;width:128.0px">1</div>
<div class="l r" style="left:1221.6px;top:759px;width:156.4px">3</div>
<div class="l" style="left:1493.4px;top:759px;width:104.3px">y</div>
<div class="l" style="left:52.8px;top:782px;width:372.8px">Festival</div>
<div class="l" style="left:434.4px;top:782px;width:128.9px">Anywhere</div>
<div class="l" style="left:567.8px;top:782px;width:167.9px">One time</div>
<div class="l" style="left:872.0px;top:782px;width:216.3px">Not now.</div>
<div class="l" style="left:52.8px;top:805px;width:372.8px">Mech of NextUp</div>
<div class="l" style="left:434.4px;top:805px;width:128.9px">Anywhere</div>
<div class="l" style="left:872.0px;top:805px;width:216.3px">No.</div>
<div class="l" style="left:52.8px;top:827px;width:372.8px">Roadtrip</div>
<div class="l" style="left:434.4px;top:827px;width:128.9px">Local</div>
<div class="l" style="left:872.0px;top:827px;width:216.3px">No</div>
<div class="l" style="left:52.8px;top:850px;width:372.8px">Foreign language</div>
<div class="l" style="left:434.4px;top:850px;width:128.9px">Anywhere</div>
<div class="l" style="left:872.0px;top:850px;width:216.3px">not now</div>
<div class="l" style="left:52.8px;top:873px;width:372.8px">Tickets to fringe after party</div>
<div class="l" style="left:434.4px;top:873px;width:128.9px">Anywhere</div>
<div class="l" style="left:52.8px;top:895px;width:372.8px">Release all content</div>
<div class="l" style="left:434.4px;top:895px;width:128.9px">Anywhere</div>
<div class="l" style="left:872.0px;top:895px;width:216.3px">n/a</div>
<div class="l" style="left:52.8px;top:918px;width:372.8px">Content Licensed to... (elsewhere)</div>
<div class="l" style="left:434.4px;top:918px;width:128.9px">Anywhere</div>
<div class="l" style="left:872.0px;top:918px;width:216.3px">Not now.</div>
</body></html>
